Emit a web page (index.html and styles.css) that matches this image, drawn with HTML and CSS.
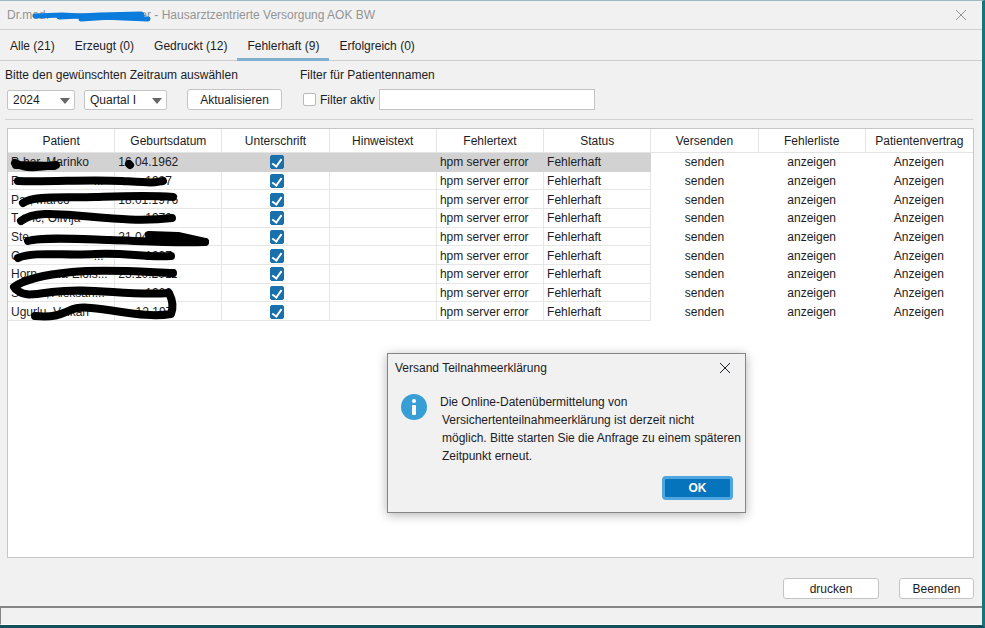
FILE: index.html
```html
<!DOCTYPE html>
<html lang="de">
<head>
<meta charset="utf-8">
<title>Hausarztzentrierte Versorgung AOK BW</title>
<link rel="stylesheet" href="styles.css">
</head>
<body>
<div class="window">
  <header class="titlebar">
    <h1>Dr.med. <span class="gap-title"></span>er - Hausarztzentrierte Versorgung AOK BW</h1>
    <button class="close" aria-label="Fenster schließen"><svg width="12" height="12" viewBox="0 0 12 12"><path d="M1 1L11 11M11 1L1 11"/></svg></button>
  </header>
  <nav class="tabs">
    <a href="#alle">Alle (21)</a>
    <a href="#erzeugt">Erzeugt (0)</a>
    <a href="#gedruckt">Gedruckt (12)</a>
    <a href="#fehlerhaft" class="active">Fehlerhaft (9)</a>
    <a href="#erfolgreich">Erfolgreich (0)</a>
  </nav>
  <section class="filters">
    <div class="period">
      <p>Bitte den gewünschten Zeitraum auswählen</p>
      <div class="controls">
        <span class="combo year"><select aria-label="Jahr"><option>2024</option></select></span>
        <span class="combo quarter"><select aria-label="Quartal"><option>Quartal I</option></select></span>
        <button class="btn refresh">Aktualisieren</button>
      </div>
    </div>
    <div class="namefilter">
      <p><label for="name">Filter für Patientennamen</label></p>
      <div class="controls">
        <label class="toggle"><input type="checkbox" class="check"> Filter aktiv</label>
        <input type="text" id="name" class="textbox">
      </div>
    </div>
  </section>
  <main class="panel">
    <table>
      <thead>
        <tr><th>Patient</th><th>Geburtsdatum</th><th>Unterschrift</th><th>Hinweistext</th><th>Fehlertext</th><th>Status</th><th>Versenden</th><th>Fehlerliste</th><th>Patientenvertrag</th></tr>
      </thead>
      <tbody>
        <tr class="selected"><td>P<span class="gap-xs"></span>bar, Marinko</td><td>16.04.1962</td><td class="mid"><input type="checkbox" class="check" aria-label="Unterschrift" checked></td><td></td><td>hpm server error</td><td>Fehlerhaft</td><td class="act">senden</td><td class="act">anzeigen</td><td class="act">Anzeigen</td></tr>
        <tr><td>R<span class="gap-l"></span>...</td><td><span class="gap-m"></span>1987</td><td class="mid"><input type="checkbox" class="check" aria-label="Unterschrift" checked></td><td></td><td>hpm server error</td><td>Fehlerhaft</td><td class="act">senden</td><td class="act">anzeigen</td><td class="act">Anzeigen</td></tr>
        <tr><td>Pa<span class="gap-xs"></span>, Marco</td><td>18.01.1976</td><td class="mid"><input type="checkbox" class="check" aria-label="Unterschrift" checked></td><td></td><td>hpm server error</td><td>Fehlerhaft</td><td class="act">senden</td><td class="act">anzeigen</td><td class="act">Anzeigen</td></tr>
        <tr><td>T<span class="gap-s"></span>ic, Olivija</td><td><span class="gap-m"></span>1970</td><td class="mid"><input type="checkbox" class="check" aria-label="Unterschrift" checked></td><td></td><td>hpm server error</td><td>Fehlerhaft</td><td class="act">senden</td><td class="act">anzeigen</td><td class="act">Anzeigen</td></tr>
        <tr><td>Ste<span class="gap-l"></span></td><td>21.04.</td><td class="mid"><input type="checkbox" class="check" aria-label="Unterschrift" checked></td><td></td><td>hpm server error</td><td>Fehlerhaft</td><td class="act">senden</td><td class="act">anzeigen</td><td class="act">Anzeigen</td></tr>
        <tr><td>C<span class="gap-l"></span>...</td><td><span class="gap-m"></span>1997</td><td class="mid"><input type="checkbox" class="check" aria-label="Unterschrift" checked></td><td></td><td>hpm server error</td><td>Fehlerhaft</td><td class="act">senden</td><td class="act">anzeigen</td><td class="act">Anzeigen</td></tr>
        <tr><td>Horn,<span class="gap-s"></span>na-Elois...</td><td>23.10.2011</td><td class="mid"><input type="checkbox" class="check" aria-label="Unterschrift" checked></td><td></td><td>hpm server error</td><td>Fehlerhaft</td><td class="act">senden</td><td class="act">anzeigen</td><td class="act">Anzeigen</td></tr>
        <tr><td>S<span class="gap-m"></span>, Aleksan...</td><td><span class="gap-m"></span>1969</td><td class="mid"><input type="checkbox" class="check" aria-label="Unterschrift" checked></td><td></td><td>hpm server error</td><td>Fehlerhaft</td><td class="act">senden</td><td class="act">anzeigen</td><td class="act">Anzeigen</td></tr>
        <tr><td>Ugurlu, Volkan</td><td><span class="gap-s"></span>.12.197</td><td class="mid"><input type="checkbox" class="check" aria-label="Unterschrift" checked></td><td></td><td>hpm server error</td><td>Fehlerhaft</td><td class="act">senden</td><td class="act">anzeigen</td><td class="act">Anzeigen</td></tr>
      </tbody>
    </table>
  </main>
  <footer class="actions">
    <button class="btn print">drucken</button>
    <button class="btn quit">Beenden</button>
  </footer>
  <div class="statusbar"></div>
</div>

<svg class="marks" width="985" height="628" viewBox="0 0 985 628" aria-hidden="true">
  <g class="blue">
    <path d="M35 16L62 15L100 17L148 19"/>
    <path d="M59 17L100 15L141 14M81 19L142 15"/>
  </g>
  <g class="black">
    <path d="M15 163Q24 168 36 167T56 165M16 165L54 166"/>
    <path d="M129 164L130 165"/>
    <path d="M18 181C55 182 90 179 122 181S151 183 163 181"/>
    <path d="M23 203C34 195 63 198 95 197S150 195 173 197"/>
    <path d="M21 221C34 211 58 214 82 216S140 222 172 218"/>
    <path d="M28 241C42 237 78 239 110 240S170 243 205 242"/>
    <path class="solid" d="M149 235L178 236L205 242L150 240Z"/>
    <path d="M18 258C34 251 65 256 95 254S145 258 171 256"/>
    <path d="M173 273C145 272 105 269 72 272C43 275 25 279 14 287C22 297 31 295 52 292C91 287 126 296 169 293C173 301 173 309 171 314C147 318 122 311 91 308C64 305 70 319 35 316"/>
  </g>
</svg>

<div class="dialog" role="dialog" aria-labelledby="dlg-title">
  <div class="dialog-head">
    <h2 id="dlg-title">Versand Teilnahmeerklärung</h2>
    <button class="close" aria-label="Dialog schließen"><svg width="12" height="12" viewBox="0 0 12 12"><path d="M1 1L11 11M11 1L1 11"/></svg></button>
  </div>
  <div class="dialog-body">
    <svg class="info" width="28" height="28" viewBox="0 0 28 28" aria-hidden="true"><circle cx="14" cy="14" r="13" fill="#389fd6"/><circle cx="14" cy="8" r="2" fill="#fff"/><rect x="12" y="12" width="4" height="10" rx="1" fill="#fff"/></svg>
    <p>Die Online-Datenübermittelung von<br>Versichertenteilnahmeerklärung ist derzeit nicht<br>möglich. Bitte starten Sie die Anfrage zu einem späteren<br>Zeitpunkt erneut.</p>
  </div>
  <div class="dialog-foot"><button class="ok">OK</button></div>
</div>
</body>
</html>
```
FILE: styles.css
```css
* { box-sizing: border-box; }

body {
  margin: 0;
  font: 12px/16px "Liberation Sans", Arial, sans-serif;
  color: #1c1c24;
  background: #f1f1f1;
}

h1, h2, p { margin: 0; font-size: 12px; font-weight: normal; }
button, select, input { font: inherit; color: inherit; margin: 0; }

.window {
  display: flex;
  flex-direction: column;
  min-height: 100vh;
  border-top: 1px solid #9fb8c6;
  border-right: 3px solid #16747f;
  border-bottom: 3px solid #154f5b;
}

.titlebar {
  display: flex;
  align-items: center;
  justify-content: space-between;
  height: 29px;
  padding: 0 13px 0 7px;
  border-bottom: 1px solid #cfcfcf;
  color: #949494;
}

.gap-title { display: inline-block; width: 88px; }
.gap-xs { display: inline-block; width: 4px; }
.gap-s { display: inline-block; width: 14px; }
.gap-m { display: inline-block; width: 27px; }
.gap-l { display: inline-block; width: 74px; }

.close {
  display: flex;
  padding: 2px;
  border: 0;
  background: none;
}
.close path { fill: none; stroke: currentColor; stroke-width: 1; }

.tabs {
  display: flex;
  height: 31px;
  border-bottom: 1px solid #cdcdcd;
}
.tabs a {
  height: 31px;
  padding: 8px 10px 0;
  color: inherit;
  text-decoration: none;
}
.tabs .active { border-bottom: 3px solid #7fb0d0; }

.filters {
  display: flex;
  gap: 18px;
  margin: 0 9px 0 5px;
  padding: 6px 0 9px;
  border-bottom: 1px solid #d2d2d2;
}
.controls {
  display: flex;
  align-items: center;
  gap: 9px;
  margin-top: 6px;
}
.period .controls { padding-left: 2px; }
.namefilter .controls { gap: 4px; }

.combo { position: relative; display: flex; }
.combo::after {
  content: "";
  position: absolute;
  right: 5px;
  top: 8px;
  border: 5px solid transparent;
  border-top: 6px solid #666;
  border-bottom: 0;
}
.combo select {
  width: 100%;
  height: 20px;
  padding: 0 5px;
  appearance: none;
  border: 1px solid #c4c4c4;
  border-radius: 2px;
  background: #fff;
}
.year { width: 68px; }
.quarter { width: 83px; }

.btn {
  height: 21px;
  padding: 0;
  border: 1px solid #c4c4c4;
  border-radius: 3px;
  background: #fff;
}
.refresh { width: 95px; margin-left: 11px; }

.toggle { display: flex; align-items: center; gap: 4px; padding-left: 3px; }
.check {
  width: 13px;
  height: 13px;
  appearance: none;
  border: 1px solid #b8b8b8;
  border-radius: 2px;
  background: #fff;
}
.check:checked {
  display: block;
  border-color: #1a70ab;
  background: #1a70ab;
}
.check:checked::after {
  content: "";
  display: block;
  width: 4px;
  height: 8px;
  margin: 1px auto;
  border: solid #fff;
  border-width: 0 2px 2px 0;
  transform: rotate(36deg);
}
.textbox {
  width: 216px;
  height: 21px;
  padding: 0 4px;
  border: 1px solid #c4c4c4;
  background: #fff;
}

.panel {
  flex: 1;
  margin: 8px 8px 0 7px;
  border: 1px solid #c6c6c6;
  background: #fff;
}

table {
  width: 100%;
  height: 192px;
  table-layout: fixed;
  border-collapse: separate;
  border-spacing: 0;
}
th {
  height: 24px;
  padding: 0;
  font-weight: normal;
  border-right: 1px solid #e4e4e4;
  border-bottom: 1px solid #e4e4e4;
}
td {
  padding: 1px 3px 0;
  line-height: 16px;
  white-space: nowrap;
  overflow: hidden;
  border-right: 1px solid #e6e6e6;
  border-bottom: 1px solid #e6e6e6;
}
th:last-child { border-right: 0; }
.selected td { background: #d2d2d2; border-color: #d2d2d2; }
td.act, .selected td.act { text-align: center; border-color: transparent; background: none; }
.mid { padding-left: 6px; }
.mid .check { width: 14px; height: 14px; margin: 0 auto; }

.actions {
  display: flex;
  justify-content: flex-end;
  gap: 20px;
  padding: 20px 8px 7px;
}
.print { width: 96px; }
.quit { width: 75px; }

.statusbar {
  height: 19px;
  border-top: 2px solid #858585;
  border-left: 1px solid #858585;
  border-bottom: 1px solid #fff;
}

.marks {
  position: absolute;
  top: 0;
  left: 0;
  pointer-events: none;
}
.marks path { fill: none; stroke-linecap: round; stroke-linejoin: round; }
.blue path { stroke: #0b7bdc; stroke-width: 5; }
.black path { stroke: #000; stroke-width: 8; }
.black .solid { fill: #000; }

.dialog {
  position: absolute;
  left: 387px;
  top: 353px;
  width: 359px;
  padding: 6px 12px 12px 7px;
  border: 1px solid #858585;
  background: #f1f1f1;
  box-shadow: 0 2px 10px rgba(0, 0, 0, .3);
}
.dialog-head { display: flex; justify-content: space-between; align-items: center; }
.dialog-body {
  display: flex;
  gap: 12px;
  padding: 17px 0 0 5px;
}
.dialog-body p { line-height: 18px; white-space: nowrap; text-indent: -2px; padding-left: 2px; }
.info { flex: none; }
.dialog-foot { display: flex; justify-content: flex-end; padding-top: 11px; }
.ok {
  width: 71px;
  height: 24px;
  padding: 0;
  border: 3px solid #4fa6de;
  border-radius: 4px;
  background: #0673bd;
  color: #fff;
  font-weight: bold;
}
```
